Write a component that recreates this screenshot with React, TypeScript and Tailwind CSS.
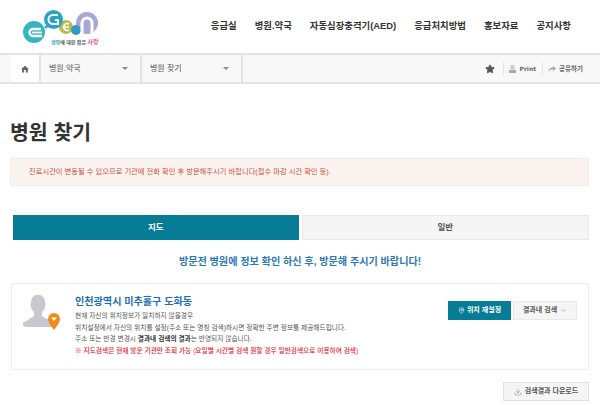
import { ChevronDown, Download, MapPin, Star } from "lucide-react";

const font = { fontFamily: '"Liberation Sans", "Noto Sans CJK KR", sans-serif' };

const navItems = ["응급실", "병원.약국", "자동심장충격기(AED)", "응급처치방법", "홍보자료", "공지사항"];

const Logo = () => (
  <svg width="80" height="36" viewBox="0 0 80 36" className="block">
    <circle cx="65" cy="15" r="11" fill="#a9a6d8" />
    <circle cx="44" cy="19" r="7" fill="#b9bb4e" />
    <circle cx="54" cy="22" r="5" fill="#2d9cc4" />
    <circle cx="31.5" cy="11.5" r="9.5" fill="#27a3c4" />
    <circle cx="12" cy="24" r="11" fill="#35b5c0" />
    <circle cx="24" cy="19" r="1.5" fill="#27a3c4" />
    <path d="M19 21 H11 a3.5 3.5 0 0 0 0 7 H20" fill="none" stroke="#fff" strokeWidth="2.4" />
    <path d="M10 24.5 H20" fill="none" stroke="#fff" strokeWidth="1.8" />
    <path d="M36 7 h-5 a4.5 4.5 0 0 0 0 9 h5 v-4 h-3" fill="none" stroke="#fff" strokeWidth="2" />
    <path d="M41 19 h6 M47 22 a3.5 3.5 0 1 1 0 -6" fill="none" stroke="#fff" strokeWidth="1.6" />
    <path d="M60 25 V15 a5 5 0 0 1 10 0 V25" fill="none" stroke="#fff" strokeWidth="3" />
  </svg>
);

const Crumb = ({ label }: { label: string }) => (
  <div className="flex w-[101px] items-center justify-between border-r-2 border-[#e2e2e2] pl-[8px] pr-[12px] text-[8px] text-[#555]">
    <span>{label}</span>
    <span className="h-0 w-0 border-x-[3px] border-t-[3px] border-x-transparent border-t-[#888]" />
  </div>
);

export default function App() {
  return (
    <div className="h-[406px] w-[600px] overflow-hidden bg-white" style={font}>
      <header className="flex h-[53px] items-center justify-between pl-[22px] pr-[29px]">
        <div className="relative h-[53px] w-[80px] pt-[8px]">
          <Logo />
          <span className="absolute left-[29px] top-[38px] whitespace-nowrap text-[5px] font-bold text-[#3aa9b8]">
            생명<span className="text-[#555]">에 대한 잡은</span> <span className="text-[6px] text-[#e0569a]">사랑</span>
          </span>
        </div>
        <nav className="flex gap-[18px] text-[9.4px] font-bold text-[#333]">
          {navItems.map((item) => (
            <span key={item}>{item}</span>
          ))}
        </nav>
      </header>

      <div className="flex h-[31px] items-stretch justify-between border-y-2 border-[#e4e4e4] bg-[#f8f8f8]">
        <div className="flex pl-[11px]">
          <div className="flex w-[30px] items-center justify-center border-r-2 border-[#e2e2e2] bg-white">
            <svg width="8" height="8" viewBox="0 0 10 10" fill="#666">
              <path d="M5 .8 0 5.2h1.4V9.4h2.5V6.4h2.2v3h2.5V5.2H10z" />
            </svg>
          </div>
          <Crumb label="병원.약국" />
          <Crumb label="병원 찾기" />
        </div>
        <div className="flex items-center pr-[17px] text-[6.5px] font-bold text-[#666]">
          <Star size={10} fill="#555" stroke="#555" />
          <span className="ml-[8px] h-[14px] w-px bg-[#e6e6e6]" />
          <svg width="7" height="8" viewBox="0 0 7 8" className="ml-[5px]" fill="#aaa">
            <path d="M1.5 0h4v4.5h-4z" fill="#ccc" />
            <path d="M0 5h7v3H0z" />
          </svg>
          <span className="ml-[4px] text-[6px]" style={{ fontFamily: '"DejaVu Sans", sans-serif' }}>Print</span>
          <span className="ml-[6px] h-[14px] w-px bg-[#e6e6e6]" />
          <svg width="8" height="6" viewBox="0 0 8 6" className="ml-[5px]" fill="#aaa">
            <path d="M5 0l3 2.6L5 5.2V3.6C3 3.6 1.400 4.200 0 6c.4-2.800 2.400-4.600 5-4.800z" />
          </svg>
          <span className="ml-[3px]">공유하기</span>
        </div>
      </div>

      <main className="px-[11px]">
        <h1 className="mt-[34px] -ml-px text-[20.5px] font-bold leading-[30px] text-[#333]">병원 찾기</h1>

        <div className="mt-[10px] -ml-px flex h-[28px] items-center border border-[#f3ebe6] bg-[#fbf3ef] pl-[18px] text-[7.3px] text-[#c8503a]">
          진료시간이 변동될 수 있으므로 기관에 전화 확인 후 방문해주시기 바랍니다(접수 마감 시간 확인 등).
        </div>

        <div className="ml-[2px] mt-[29px] flex gap-[3px] text-[8.5px] font-bold">
          <div className="flex h-[25px] flex-1 items-center justify-center bg-[#067c96] text-white">지도</div>
          <div className="flex h-[25px] flex-1 items-center justify-center border border-[#e8e8e8] bg-[#f5f5f5] text-[#555]">일반</div>
        </div>

        <p className="mt-[14px] text-center text-[10.1px] font-bold leading-[16px] text-[#2b78b5]">
          방문전 병원에 정보 확인 하신 후, 방문해 주시기 바랍니다!
        </p>

        <section className="mt-[13px] flex h-[87px] justify-between border border-[#eeeeee] pl-[11px] pr-[11px]">
          <div className="flex">
            <div className="mt-[11px] h-[40px] w-[42px]">
              <svg width="42" height="40" viewBox="0 0 42 40" className="block">
                <ellipse cx="15" cy="9" rx="7.5" ry="9.500" fill="#c6c9ce" />
                <path d="M11 15 v6 L0 28 q-1 4 3 4 h26 q3 0 2 -4 L19 21 v-6z" fill="#c6c9ce" />
                <path d="M31 18 a6 6 0 0 1 6 6 c0 4 -6 11 -6 11 s-6 -7 -6 -11 a6 6 0 0 1 6 -6z" fill="#ef8a1e" />
                <path d="M28 22.500 h6 l-3 3.500z" fill="#fff" />
              </svg>
            </div>
            <div className="ml-[10px] pt-[10px]">
              <h2 className="text-[10.1px] font-bold leading-[16px] text-[#1f6fb0]">인천광역시 미추홀구 도화동</h2>
              <div className="text-[6.7px] leading-[11.7px] text-[#555]">
                <p>현재 자신의 위치정보가 일치하지 않을경우</p>
                <p>위치설정에서 자신의 위치를 설정(주소 또는 명칭 검색)하시면 정확한 주변 정보를 제공해드립니다.</p>
                <p>
                  주소 또는 반경 변경시 <b className="text-[#333]">결과내 검색의 결과</b>는 반영되지 않습니다.
                </p>
                <p className="font-medium text-[#e2232e]">※ 지도검색은 현재 방문 기관만 조회 가능 (요일별 시간별 검색 원할 경우 일반검색으로 이용하여 검색)</p>
              </div>
            </div>
          </div>
          <div className="mt-[17px] flex h-[19px] gap-[2px] text-[7px] font-bold">
            <div className="flex w-[63px] items-center justify-center gap-[2px] bg-[#067c96] text-white">
              <MapPin size={7} />
              <span>위치 재설정</span>
            </div>
            <div className="flex w-[64px] items-center justify-center gap-[3px] border border-[#e8e8e8] bg-[#f5f5f5] text-[#555]">
              <span>결과내 검색</span>
              <ChevronDown size={7} className="text-[#888]" />
            </div>
          </div>
        </section>

        <div className="mt-[12px] flex justify-end">
          <div className="flex h-[19px] w-[86px] items-center justify-center gap-[3px] border border-[#e2e2e2] bg-[#f5f5f5] text-[7px] font-bold text-[#555]">
            <Download size={8} className="text-[#999]" />
            <span>검색결과 다운로드</span>
          </div>
        </div>
      </main>
    </div>
  );
}
